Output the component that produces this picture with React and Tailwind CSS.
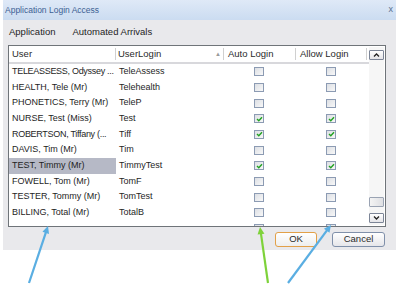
import React from 'react';

const rows = [
    { user: 'TELEASSESS, Odyssey ...', login: 'TeleAssess', auto: false, allow: false, tight: true },
    { user: 'HEALTH, Tele (Mr)', login: 'Telehealth', auto: false, allow: false },
    { user: 'PHONETICS, Terry (Mr)', login: 'TeleP', auto: false, allow: false },
    { user: 'NURSE, Test (Miss)', login: 'Test', auto: true, allow: true },
    { user: 'ROBERTSON, Tiffany (...', login: 'Tiff', auto: true, allow: true, tight: true },
    { user: 'DAVIS, Tim (Mr)', login: 'Tim', auto: false, allow: false },
    { user: 'TEST, Timmy (Mr)', login: 'TimmyTest', auto: true, allow: true, selected: true },
    { user: 'FOWELL, Tom (Mr)', login: 'TomF', auto: false, allow: false },
    { user: 'TESTER, Tommy (Mr)', login: 'TomTest', auto: false, allow: false },
    { user: 'BILLING, Total (Mr)', login: 'TotalB', auto: false, allow: false },
    { user: '', login: '', auto: false, allow: false },
];

const CheckBox = ({ checked }) => (
    <div className="w-[10px] h-[9px] border border-[#8c9bb3] bg-gradient-to-br from-[#dcdfe4] to-[#f8f8f8] flex items-center justify-center">
        {checked && (
            <svg width="7" height="6" viewBox="0 0 7 6">
                <path d="M1 3 L2.8 4.8 L6 1.2" stroke="#21a121" strokeWidth="1.4" fill="none" />
            </svg>
        )}
    </div>
);

const Arrow = ({ x1, y1, x2, y2, color }) => {
    const a = Math.atan2(y2 - y1, x2 - x1);
    const len = 8;
    const spread = 0.45;
    const p1 = [x2 - len * Math.cos(a - spread), y2 - len * Math.sin(a - spread)];
    const p2 = [x2 - len * Math.cos(a + spread), y2 - len * Math.sin(a + spread)];
    return (
        <g>
            <line x1={x1} y1={y1} x2={x2 - 4 * Math.cos(a)} y2={y2 - 4 * Math.sin(a)} stroke={color} strokeWidth="2.2" />
            <polygon points={`${x2},${y2} ${p1[0]},${p1[1]} ${p2[0]},${p2[1]}`} fill={color} />
        </g>
    );
};

export default function App() {
    return (
        <div className="relative w-[400px] h-[286px] bg-white overflow-hidden font-['Liberation_Sans',Arial,sans-serif]">
            <div className="ml-[3px] w-[393px] h-[250px] bg-[#e9e9ec] flex flex-col">
                {/* title bar */}
                <div className="h-[20px] bg-gradient-to-b from-[#dfe9f7] to-[#cbdcf1] flex items-center justify-between pl-[2px] pr-[3px]">
                    <span className="text-[8.5px] text-[#3d5f93]">Application Login Access</span>
                    <span className="text-[9px] text-[#5a6f8f]">x</span>
                </div>

                {/* menu */}
                <div className="h-[25px] flex items-center gap-[17px] pl-[6px] text-[9.5px] text-[#1e1e1e]">
                    <span>Application</span>
                    <span>Automated Arrivals</span>
                </div>

                {/* list */}
                <div className="ml-[5px] w-[378px] h-[182px] border border-[#6f7479] bg-white flex overflow-hidden">
                    <div className="flex-1 flex flex-col overflow-hidden">
                        <div className="h-[18px] shrink-0 flex items-center border-b-2 border-[#d8d8dc] text-[9.5px] text-[#2a2a2a] whitespace-nowrap">
                            <div className="w-[106px] pl-[3px]">User</div>
                            <div className="w-[108px] h-[12px] border-l border-[#d0d0d0] pl-[2px] flex items-center justify-between pr-[2px]">
                                <span>UserLogin</span>
                                <span className="text-[6px] text-[#9a9a9a]">▲</span>
                            </div>
                            <div className="w-[72px] h-[12px] border-l border-[#d0d0d0] pl-[4px] flex items-center">Auto Login</div>
                            <div className="w-[72px] h-[12px] border-l border-r border-[#d0d0d0] pl-[4px] flex items-center">Allow Login</div>
                        </div>
                        {rows.map((r, i) => (
                            <div key={i} className="h-[15.67px] shrink-0 flex items-center text-[9px] text-[#1e1e1e] whitespace-nowrap">
                                <div className={`w-[107px] h-full pl-[3px] flex items-center ${r.tight ? 'tracking-[-0.3px]' : ''} ${r.selected ? 'bg-[#b6b9c6]' : ''}`}>
                                    {r.user}
                                </div>
                                <div className="w-[107px] pl-[3px]">{r.login}</div>
                                <div className="w-[72px] flex justify-center">
                                    <CheckBox checked={r.auto} />
                                </div>
                                <div className="w-[72px] flex justify-center">
                                    <CheckBox checked={r.allow} />
                                </div>
                            </div>
                        ))}
                    </div>

                    {/* scrollbar */}
                    <div className="w-[15px] mr-[1px] my-[1px] bg-[#f6f6f6] flex flex-col justify-between">
                        <div className="h-[10px] mt-[3px] border border-[#7c8597] rounded-[1px] bg-gradient-to-b from-white to-[#e4e4e8] flex items-center justify-center">
                            <svg width="7" height="4" viewBox="0 0 7 4">
                                <path d="M1 3.5 L3.5 1 L6 3.5" stroke="#222" strokeWidth="1.3" fill="none" />
                            </svg>
                        </div>
                        <div className="flex flex-col gap-[6px] mb-[2px]">
                            <div className="h-[10px] border border-[#9aa3b3] rounded-[1px] bg-gradient-to-r from-[#f4f4f4] to-[#dedfe3]" />
                            <div className="h-[10px] border border-[#7c8597] rounded-[1px] bg-gradient-to-b from-white to-[#e4e4e8] flex items-center justify-center">
                                <svg width="7" height="4" viewBox="0 0 7 4">
                                    <path d="M1 0.5 L3.5 3 L6 0.5" stroke="#222" strokeWidth="1.3" fill="none" />
                                </svg>
                            </div>
                        </div>
                    </div>
                </div>

                {/* buttons */}
                <div className="flex justify-end gap-[15px] pr-[11px] pt-[5px] text-[9.5px] text-[#2a2a2a]">
                    <button className="w-[42px] h-[15px] rounded-[3px] border border-[#e2a048] bg-gradient-to-b from-white to-[#eeeeee] flex items-center justify-center">
                        OK
                    </button>
                    <button className="w-[53px] h-[15px] rounded-[3px] border border-[#8090aa] bg-gradient-to-b from-white to-[#e6e6ea] flex items-center justify-center">
                        Cancel
                    </button>
                </div>
            </div>

            {/* annotation arrows */}
            <svg className="absolute left-0 top-0" width="400" height="286">
                <Arrow x1={29} y1={283} x2={48} y2={226} color="#5aaee2" />
                <Arrow x1={268} y1={283} x2={260} y2={227} color="#7ed23a" />
                <Arrow x1={288} y1={283} x2={331} y2={225} color="#5aaee2" />
            </svg>
        </div>
    );
}
